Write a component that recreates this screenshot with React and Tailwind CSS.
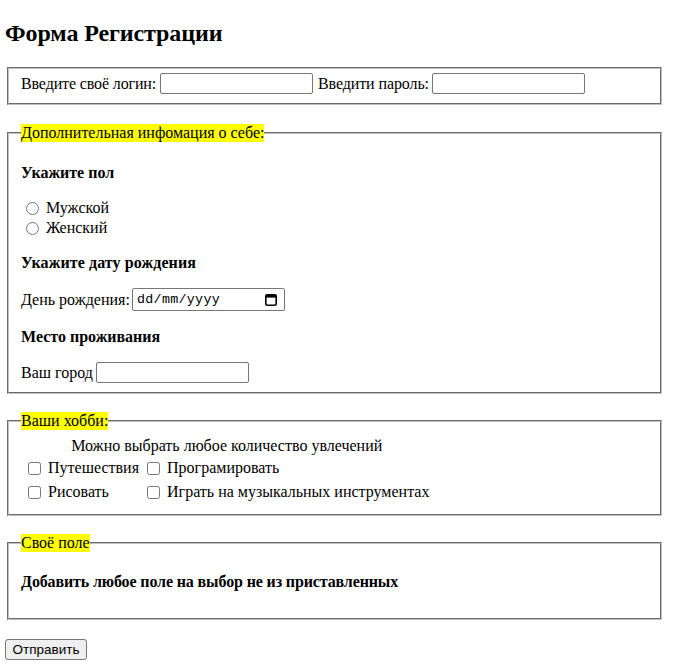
import React from "react";

function Fieldset({ legend, className = "", children }) {
  return (
    <fieldset
      className={
        "ml-[2px] w-[655px] border-2 [border-style:groove] border-[#c0c0c0] px-[12px] " +
        className
      }
    >
      {legend && <legend className="bg-[#ffff00] leading-[18px]">{legend}</legend>}
      {children}
    </fieldset>
  );
}

function TextInput({ className = "" }) {
  return (
    <input
      type="text"
      className={
        "w-[153px] h-[21px] border border-[#767676] rounded-[2px] px-[2px] text-[13.33px] [font-family:'Liberation_Sans',sans-serif] bg-white " +
        className
      }
    />
  );
}

function Check({ label }) {
  return (
    <label className="flex items-center h-[20px] whitespace-nowrap">
      <input type="checkbox" className="ml-[4px] mr-[3px] w-[13px] h-[13px]" />
      <span className="ml-[4px]">{label}</span>
    </label>
  );
}

export default function App() {
  return (
    <div className="min-h-screen bg-white text-black pl-[5px] pb-[10px] text-[16px] leading-[18px] [font-family:'Liberation_Serif','Times_New_Roman',serif]">
      <h2 className="pt-[19px] text-[24px] leading-[28px] font-bold mb-[20px] tracking-[-0.1px]">
        Форма Регистрации
      </h2>

      <Fieldset className="pt-[4px] pb-[9px]">
        <div className="flex items-center h-[21px] whitespace-nowrap">
          <span className="w-[135px] tracking-[-0.13px]">Введите своё логин:</span>
          <TextInput className="ml-[4px]" />
          <span className="ml-[5px] w-[110px] tracking-[-0.1px]">Введити пароль:</span>
          <TextInput className="ml-[4px]" />
        </div>
      </Fieldset>

      <Fieldset legend="Дополнительная инфомация о себе:" className="mt-[19px] pb-[9px]">
        <div className="flex flex-col">
          <p className="font-bold mt-[22px]">Укажите пол</p>
          <label className="mt-[16px] h-[20px] flex items-center">
            <input type="radio" name="gender" className="ml-[5px] mr-[3px] w-[13px] h-[13px]" />
            <span className="ml-[4px]">Мужской</span>
          </label>
          <label className="h-[20px] flex items-center">
            <input type="radio" name="gender" className="ml-[5px] mr-[3px] w-[13px] h-[13px]" />
            <span className="ml-[4px]">Женский</span>
          </label>
          <p className="font-bold mt-[16px] tracking-[0.1px]">Укажите дату рождения</p>
          <div className="mt-[16px] flex items-center h-[23px] whitespace-nowrap">
            <span className="w-[107px]">День рождения:</span>
            <div className="ml-[4px] w-[153px] h-[23px] border border-[#767676] rounded-[2px] bg-white flex items-center justify-between pl-[4px] pr-[7px]">
              <span className="text-[13.33px] tracking-[0.3px] [font-family:'Liberation_Mono',monospace]">
                dd/mm/yyyy
              </span>
              <svg width="12" height="13" viewBox="0 0 12 13" aria-hidden="true">
                <rect x="0.8" y="1.8" width="10.4" height="10.4" rx="1.5" fill="none" stroke="#000" strokeWidth="1.6" />
                <rect x="0.8" y="1.8" width="10.4" height="2.8" fill="#000" />
              </svg>
            </div>
          </div>
          <p className="font-bold mt-[17px]">Место проживания</p>
          <div className="mt-[16px] flex items-center h-[21px] whitespace-nowrap">
            <span className="w-[71px]">Ваш город</span>
            <TextInput className="ml-[4px]" />
          </div>
        </div>
      </Fieldset>

      <Fieldset legend="Ваши хобби:" className="mt-[18px] pb-[9px]">
        <table className="mt-[7px] border-separate border-spacing-[2px]">
          <caption className="leading-[18px]">Можно выбрать любое количество увлечений</caption>
          <tbody>
            <tr>
              <td className="p-[1px]">
                <Check label="Путешествия" />
              </td>
              <td className="p-[1px]">
                <Check label="Програмировать" />
              </td>
            </tr>
            <tr>
              <td className="p-[1px]">
                <Check label="Рисовать" />
              </td>
              <td className="p-[1px]">
                <Check label="Играть на музыкальных инструментах" />
              </td>
            </tr>
          </tbody>
        </table>
      </Fieldset>

      <Fieldset legend="Своё поле" className="mt-[18px] pb-[27px]">
        <p className="font-bold mt-[21px] tracking-[-0.13px]">
          Добавить любое поле на выбор не из приставленных
        </p>
      </Fieldset>

      <button
        type="submit"
        className="mt-[19px] h-[21px] w-[82px] bg-[#efefef] border border-[#767676] rounded-[3px] text-[13.5px] leading-[16px] [font-family:'Liberation_Sans',Arial,sans-serif] text-black"
      >
        Отправить
      </button>
    </div>
  );
}
